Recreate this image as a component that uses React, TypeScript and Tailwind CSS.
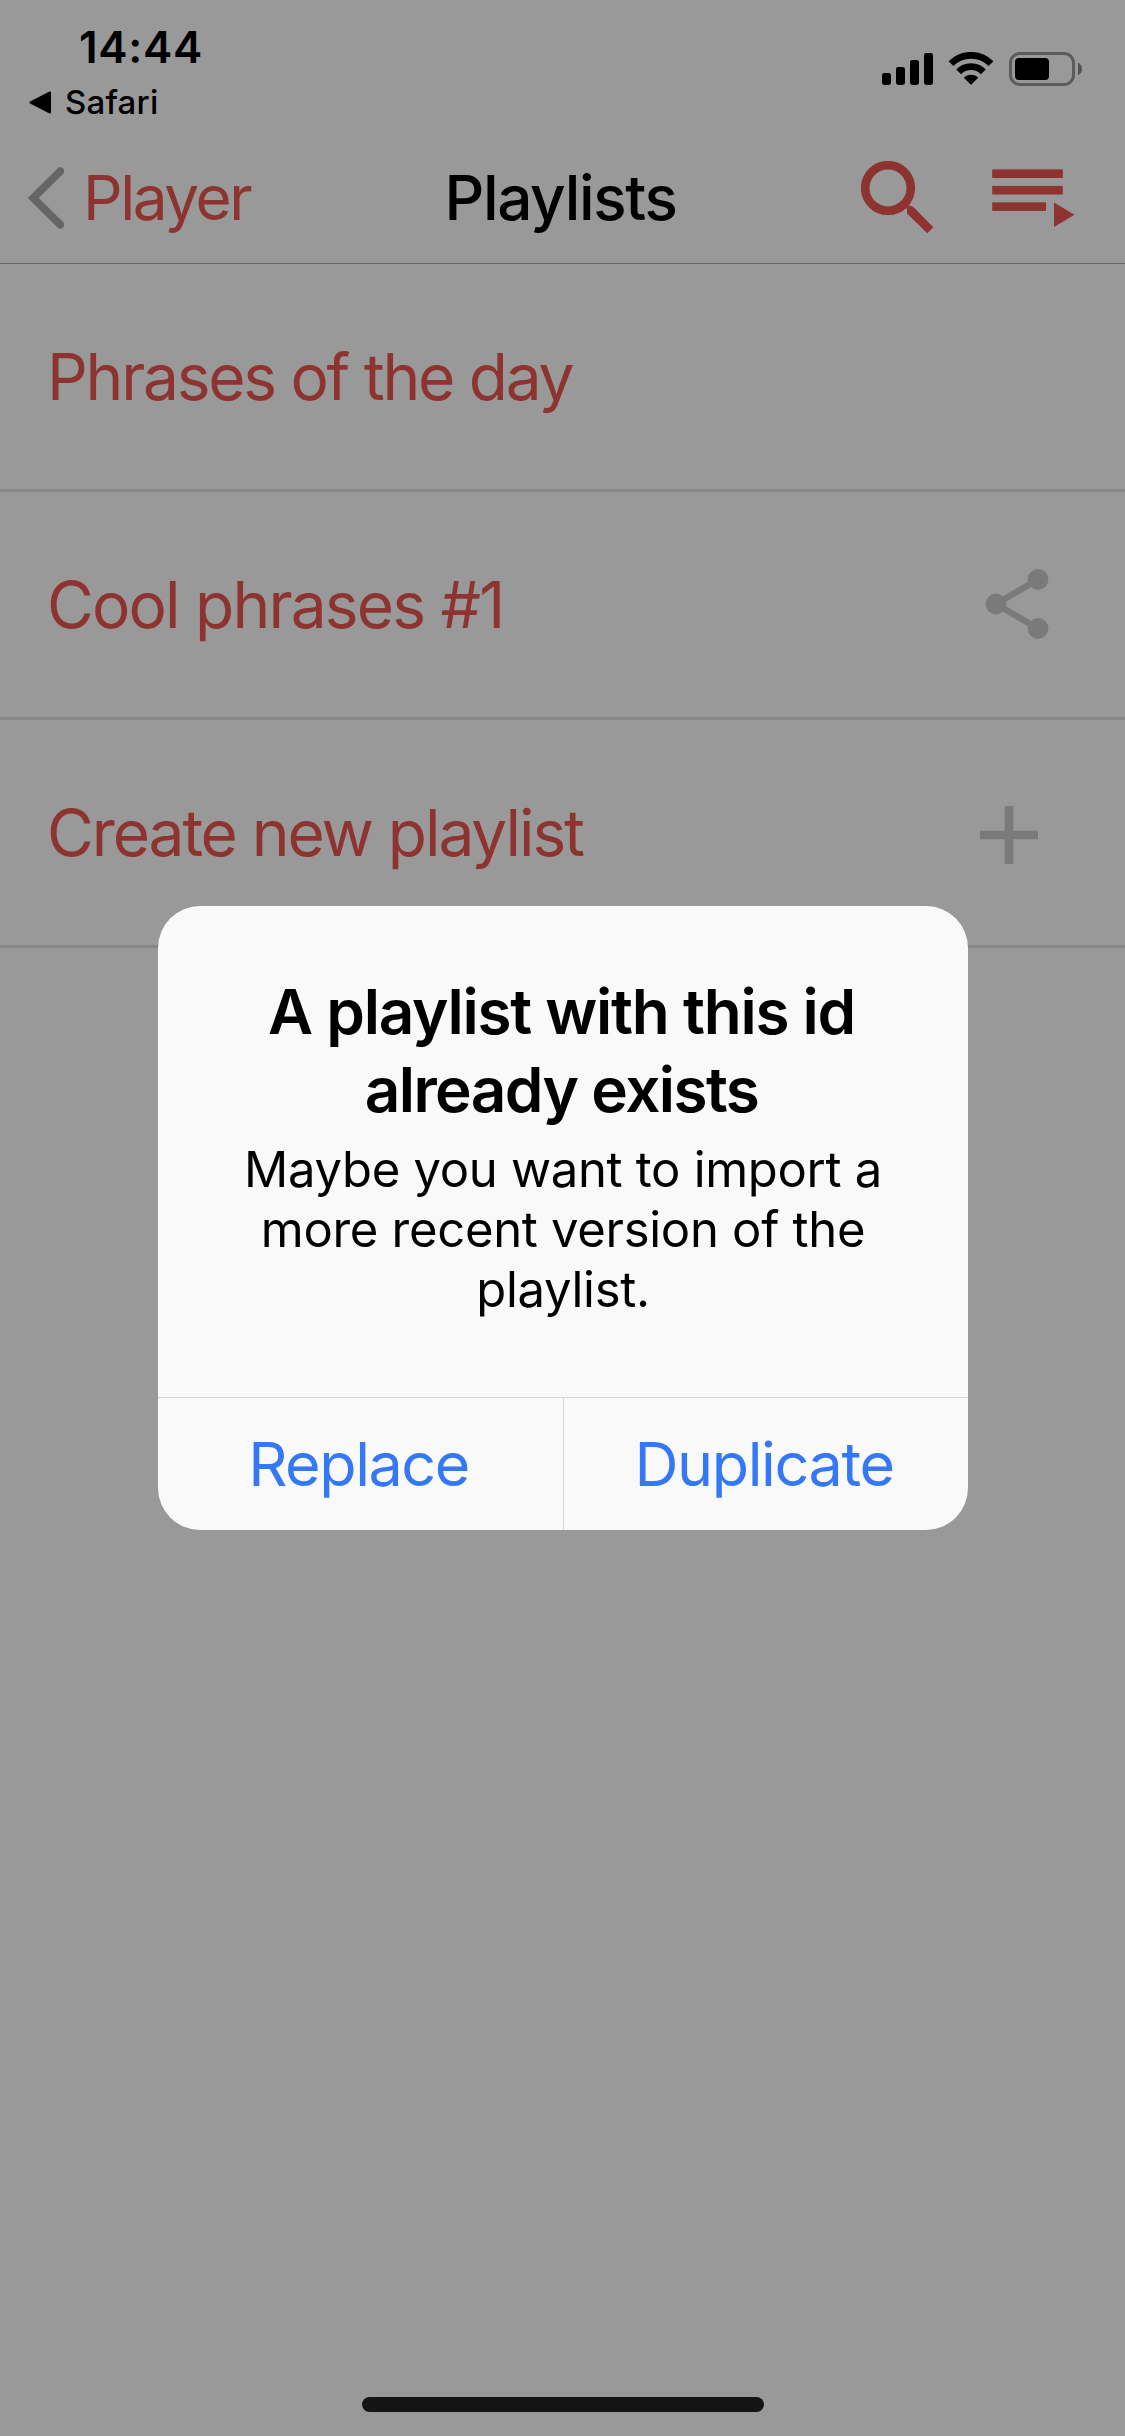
import React from "react";

function SignalIcon() {
  return (
    <svg className="h-[34px] w-[51px]" viewBox="0 0 51 34" fill="#000">
      <rect x="0" y="21" width="9" height="12" rx="2.4" />
      <rect x="14" y="15" width="9" height="18" rx="2.4" />
      <rect x="28" y="8" width="9" height="25" rx="2.4" />
      <rect x="42" y="1" width="9" height="32" rx="2.4" />
    </svg>
  );
}

function WifiIcon() {
  return (
    <svg className="h-[34px] w-[46px]" viewBox="0 0 46 34" fill="none" stroke="#000">
      <path d="M3 11.7A28.1 28.1 0 0 1 43 11.7" strokeWidth="6.8" />
      <path d="M10.7 19.8A17 17 0 0 1 35.3 19.8" strokeWidth="6.8" />
      <path
        d="M23 31.6L17 25.7A9.5 9.5 0 0 1 29 25.7Z"
        fill="#000"
        strokeWidth="1.8"
        strokeLinejoin="round"
      />
    </svg>
  );
}

function BatteryIcon() {
  return (
    <svg className="h-[34px] w-[73px]" viewBox="0 0 73 34">
      <rect x="1.5" y="1.5" width="63" height="31" rx="9.5" fill="none" stroke="#5c5c5c" strokeWidth="3" />
      <rect x="6" y="6" width="34" height="22" rx="4" fill="#000" />
      <path d="M69 10.8C74.3 13 74.3 21 69 23.2Z" fill="#525252" />
    </svg>
  );
}

function SearchIcon() {
  return (
    <svg className="h-[74px] w-[74px]" viewBox="0 0 74 74">
      <circle cx="27" cy="27" r="22.8" fill="none" stroke="#8d3431" strokeWidth="8.6" />
      <path d="M44 47.5L47.5 44L52.5 46L72.3 66.3L66.3 72.3L46 52.5V47.5Z" fill="#8d3431" />
    </svg>
  );
}

function QueueIcon() {
  return (
    <svg className="h-[60px] w-[83px]" viewBox="0 0 83 60" fill="#8d3431">
      <rect x="0.2" y="1.4" width="70.6" height="8.6" />
      <rect x="0.2" y="17.9" width="70.6" height="8.6" />
      <rect x="0.2" y="34.3" width="53.8" height="8.6" />
      <path d="M62 34.6L82.5 46.8L62 59Z" />
    </svg>
  );
}

function ShareIcon() {
  return (
    <svg className="mb-px h-[70px] w-[64px]" viewBox="0 0 64 70" fill="#7a7a7a">
      <path d="M53 10.5L11 35L53 59.5" fill="none" stroke="#7a7a7a" strokeWidth="6.2" />
      <circle cx="53" cy="10.5" r="10.4" />
      <circle cx="11" cy="35" r="10.4" />
      <circle cx="53" cy="59.5" r="10.4" />
    </svg>
  );
}

function PlusIcon() {
  return (
    <svg className="mt-[4px] h-[58px] w-[58px]" viewBox="0 0 58 58" fill="#7a7a7a">
      <path d="M24.7 0H33.3V24.7H58V33.3H33.3V58H24.7V33.3H0V24.7H24.7Z" />
    </svg>
  );
}

function Row({ children, icon }: { children: React.ReactNode; icon?: React.ReactNode }) {
  return (
    <li className="flex h-[228px] items-center justify-between border-b-[3px] border-[#878787] pl-[47px] text-[64px] whitespace-nowrap text-[#8d3431]">
      {children}
      {icon}
    </li>
  );
}

export default function App() {
  return (
    <div className="relative flex h-[2436px] w-[1125px] flex-col overflow-hidden bg-[#999999] font-['Inter',sans-serif] text-black">
      <div className="flex h-[132px] shrink-0 justify-between">
        <div className="pt-[17px]">
          <div className="pl-[79px] text-[44px] leading-[60px] font-semibold tracking-[0.69px]">14:44</div>
          <div className="mt-[5px] flex items-center gap-[14px] pl-[29px] text-[33px] leading-[40px] font-medium tracking-[0.2px]">
            <svg className="h-[23px] w-[22px]" viewBox="0 0 22 23">
              <path d="M1.5 11.5L21 1.5V21.5Z" stroke="#000" strokeWidth="2" strokeLinejoin="round" />
            </svg>
            <span>Safari</span>
          </div>
        </div>
        <div className="flex items-start pt-[52px] pr-[43px]">
          <SignalIcon />
          <div className="w-[15px]" />
          <WifiIcon />
          <div className="w-[15px]" />
          <BatteryIcon />
        </div>
      </div>

      <header className="grid h-[132px] shrink-0 grid-cols-[1fr_auto_1fr] items-center border-b border-[#666666]">
        <div className="flex items-center pl-[28px]">
          <svg className="h-[62px] w-[36px]" viewBox="0 0 36 62">
            <path
              d="M32.3 4.2L5.3 31L32.3 57.8"
              fill="none"
              stroke="#656565"
              strokeWidth="7.8"
              strokeLinecap="round"
            />
          </svg>
          <span className="pl-[19px] text-[62px] leading-[75px] tracking-[-2.4px] text-[#8d3431]">Player</span>
        </div>
        <h1 className="pr-[4px] text-[62px] leading-[75px] font-medium tracking-[-1.34px]">Playlists</h1>
        <div className="flex items-start justify-end pr-[50px]">
          <SearchIcon />
          <div className="w-[57px]" />
          <div className="pt-[7px]">
            <QueueIcon />
          </div>
        </div>
      </header>

      <ul>
        <Row>
          <span className="tracking-[-2.27px]">Phrases of the day</span>
        </Row>
        <Row icon={<div className="pr-[76px]"><ShareIcon /></div>}>
          <span className="tracking-[-1.8px]">Cool phrases #1</span>
        </Row>
        <Row icon={<div className="pr-[87px]"><PlusIcon /></div>}>
          <span className="tracking-[-2.07px]">Create new playlist</span>
        </Row>
      </ul>

      <div className="mt-auto mb-[24px] ml-[362px] h-[15px] w-[402px] rounded-full bg-[#141414]" />

      <div className="absolute inset-0 flex items-center justify-center pl-px">
        <div role="alertdialog" className="h-[624px] w-[810px] overflow-hidden rounded-[42px] bg-[#f9f9f9] text-center whitespace-nowrap">
          <div className="h-[491px] pt-[67px]">
            <h2 className="pr-[3px] text-[62px] leading-[78px] font-semibold">
              <span className="block tracking-[-1.24px]">A playlist with this id</span>
              <span className="block tracking-[-1.58px]">already exists</span>
            </h2>
            <p className="mt-[11px] text-[49px] leading-[60px] tracking-[-0.3px]">
              Maybe you want to import a
              <br />
              more recent version of the
              <br />
              playlist.
            </p>
          </div>
          <div className="flex h-[133px] border-t border-[#d6d6d6] text-[61px] leading-[132px] text-[#3478f6]">
            <button className="w-[406px] border-r border-[#d6d6d6] pr-[4px] tracking-[-1.44px]">Replace</button>
            <button className="flex-1 pr-[4px] tracking-[-1.38px]">Duplicate</button>
          </div>
        </div>
      </div>
    </div>
  );
}
